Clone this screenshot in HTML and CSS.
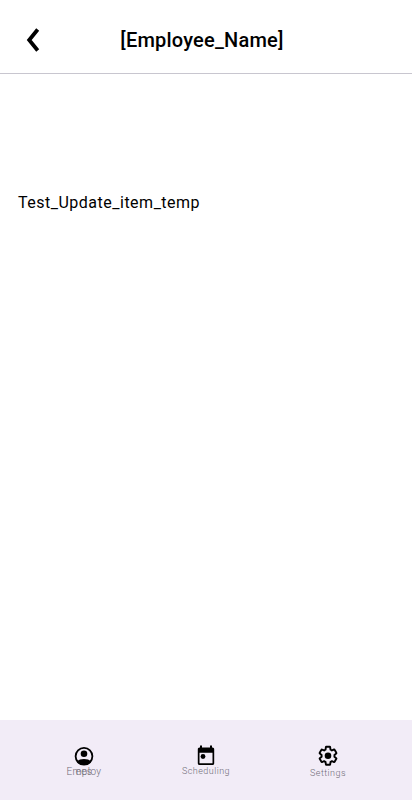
FILE: index.html
```html
<!DOCTYPE html>
<html lang="en">
<head>
<meta charset="utf-8">
<title>Employee</title>
<link rel="stylesheet" href="styles.css">
</head>
<body>
<div class="screen">
  <header class="header">
    <svg class="back" width="14" height="24" viewBox="0 0 14 24"><path d="M11.700 1.500 3.200 12l8.500 10.500" fill="none" stroke="#000" stroke-width="3.800"/></svg>
    <h1 class="title">[Employee_Name]</h1>
  </header>
  <main class="content"><p class="item">Test_Update_item_temp</p></main>
  <nav class="tabs">
    <a class="tab">
      <svg class="icon person" viewBox="0 0 24 24"><circle cx="12" cy="12.300" r="8.400" fill="none" stroke="#000" stroke-width="1.800"/><circle cx="12" cy="9.800" r="3.300"/><path d="M12 15c-3 0-5.500.8-7.200 2.500a9 9 0 0 0 14.400 0C17.500 15.800 15 15 12 15z"/></svg>
      <span class="label wrapped"><span>Employ</span><span>ees</span></span>
    </a>
    <a class="tab">
      <svg class="icon calendar" viewBox="0 0 24 24"><path d="M18.500 3.500H18V1.500h-2v2H8v-2H6v2h-.5c-1 0-1.700.8-1.700 1.700v14c0 1 .8 1.800 1.700 1.800h13c1 0 1.700-.8 1.700-1.800v-14c0-.9-.7-1.700-1.700-1.700zm0 15.700h-13V8.700h13z"/><circle cx="9" cy="12.500" r="2.400"/></svg>
      <span class="label scheduling">Scheduling</span>
    </a>
    <a class="tab">
      <svg class="icon gear" viewBox="0 0 24 24"><path d="M19.430 12.980c.04-.32.07-.64.07-.98s-.03-.66-.07-.98l2.110-1.650c.19-.15.24-.42.12-.64l-2-3.460c-.12-.22-.38-.31-.61-.22l-2.490 1c-.52-.4-1.080-.73-1.690-.98l-.38-2.650A.49.49 0 0 0 14 2h-4c-.25 0-.46.18-.49.42l-.38 2.650c-.61.25-1.170.59-1.690.98l-2.490-1c-.23-.09-.49 0-.61.22l-2 3.460c-.13.22-.07.49.12.64l2.110 1.650c-.04.32-.07.65-.07.98s.03.66.07.98l-2.110 1.650c-.19.15-.24.42-.12.64l2 3.460c.12.22.38.31.61.22l2.490-1c.52.4 1.080.73 1.690.98l.38 2.650c.03.24.24.42.49.42h4c.25 0 .46-.18.49-.42l.38-2.650c.61-.25 1.170-.59 1.690-.98l2.490 1c.23.09.49 0 .61-.22l2-3.460c.12-.22.07-.49-.12-.64z" fill="none" stroke="#000" stroke-width="2.200" stroke-linejoin="round" transform="translate(1.700 1) scale(.86 .9)"/><circle cx="12" cy="11.800" r="3.300"/></svg>
      <span class="label settings">Settings</span>
    </a>
  </nav>
</div>
</body>
</html>
```
FILE: styles.css
```css
* { box-sizing: border-box; }
body { margin: 0; font-family: Roboto, "Liberation Sans", sans-serif; color: #000; }
.screen { width: 412px; height: 800px; display: flex; flex-direction: column; background: #fff; overflow: hidden; }
.header { height: 74px; display: grid; grid-template-columns: 54px 1fr 62px; align-items: center; padding-top: 6px; border-bottom: 1px solid #c8c6cf; }
.back { margin-left: 26px; }
.title { margin: 0; font-size: 20px; line-height: 24px; font-weight: 500; letter-spacing: 0.2px; text-align: center; }
.content { flex: 1; padding: 117px 18px 0; }
.item { margin: 0; font-size: 16px; line-height: 24px; letter-spacing: 0.5px; }
.tabs { height: 80px; display: flex; justify-content: center; gap: 8px; background: #f2ecf7; padding-top: 24px; }
.tab { width: 114px; display: flex; flex-direction: column; align-items: center; }
.icon { width: 24px; height: 24px; }
.label { font-size: 10px; line-height: 10px; font-weight: 300; color: #716d77; }
.wrapped { display: grid; justify-items: center; letter-spacing: 0.4px; margin-top: -1px; }
.wrapped span { grid-area: 1 / 1; }
.scheduling { font-size: 9px; letter-spacing: 0.45px; margin-top: -2px; }
.settings { font-size: 9px; letter-spacing: 0.45px; }
```
